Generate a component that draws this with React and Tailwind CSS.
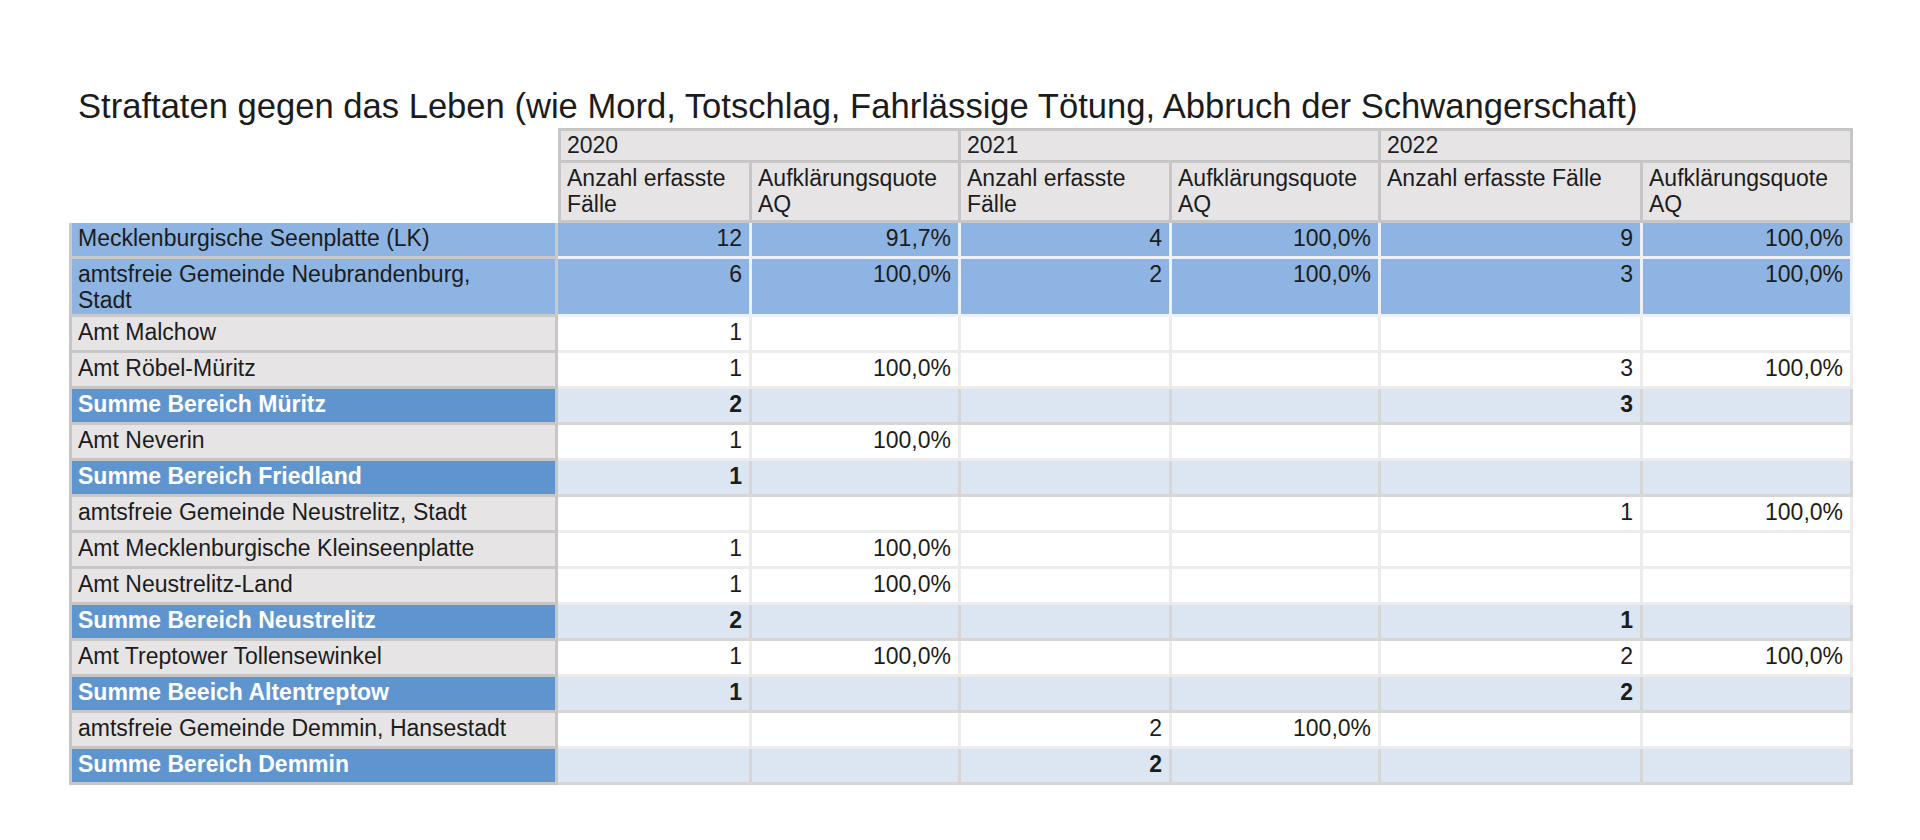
import React from 'react';

// rows of the table: label, six values, kind of row
const rows = [
  { label: 'Mecklenburgische Seenplatte (LK)', values: ['12', '91,7%', '4', '100,0%', '9', '100,0%'], kind: 'lk' },
  { label: ['amtsfreie Gemeinde Neubrandenburg,', 'Stadt'], values: ['6', '100,0%', '2', '100,0%', '3', '100,0%'], kind: 'lk' },
  { label: 'Amt Malchow', values: ['1', '', '', '', '', ''], kind: 'amt' },
  { label: 'Amt Röbel-Müritz', values: ['1', '100,0%', '', '', '3', '100,0%'], kind: 'amt' },
  { label: 'Summe Bereich Müritz', values: ['2', '', '', '', '3', ''], kind: 'sum' },
  { label: 'Amt Neverin', values: ['1', '100,0%', '', '', '', ''], kind: 'amt' },
  { label: 'Summe Bereich Friedland', values: ['1', '', '', '', '', ''], kind: 'sum' },
  { label: 'amtsfreie Gemeinde Neustrelitz, Stadt', values: ['', '', '', '', '1', '100,0%'], kind: 'amt' },
  { label: 'Amt Mecklenburgische Kleinseenplatte', values: ['1', '100,0%', '', '', '', ''], kind: 'amt' },
  { label: 'Amt Neustrelitz-Land', values: ['1', '100,0%', '', '', '', ''], kind: 'amt' },
  { label: 'Summe Bereich Neustrelitz', values: ['2', '', '', '', '1', ''], kind: 'sum' },
  { label: 'Amt Treptower Tollensewinkel', values: ['1', '100,0%', '', '', '2', '100,0%'], kind: 'amt' },
  { label: 'Summe Beeich Altentreptow', values: ['1', '', '', '', '2', ''], kind: 'sum' },
  { label: 'amtsfreie Gemeinde Demmin, Hansestadt', values: ['', '', '2', '100,0%', '', ''], kind: 'amt' },
  { label: 'Summe Bereich Demmin', values: ['', '', '2', '', '', ''], kind: 'sum' },
];

const labelClass = {
  lk: 'bg-[#8db4e2] border-[#c9c9c9] text-[#1c1c1c]',
  amt: 'bg-[#e6e4e5] border-[#c6c6c6] text-[#1c1c1c]',
  sum: 'bg-[#5f95cf] border-[#c6c6c6] text-white font-bold',
};

const cellClass = {
  lk: 'bg-[#8db4e2] border-[#eef2f8]',
  amt: 'bg-white border-[#ececec]',
  sum: 'bg-[#dce5f2] border-[#d6d6d6] font-bold',
};

const App = () => {
  return (
    <div className="min-h-[840px] w-[1920px] bg-white font-['Liberation_Sans',Arial,sans-serif] text-[#1c1c1c]">
      <div className="pt-[90px] pl-[69px]">
        <h1 className="pl-[9px] text-[34.6px] leading-[32px] font-normal text-[#1c1c1c] whitespace-nowrap">
          Straftaten gegen das Leben (wie Mord, Totschlag, Fahrlässige Tötung, Abbruch der Schwangerschaft)
        </h1>

        <table className="mt-[6px] table-fixed border-separate border-spacing-0 text-[23px] leading-[26px] w-[1784px]">
          <colgroup>
            <col className="w-[489px]" />
            <col className="w-[194px]" />
            <col className="w-[209px]" />
            <col className="w-[211px]" />
            <col className="w-[209px]" />
            <col className="w-[262px]" />
            <col className="w-[210px]" />
          </colgroup>
          <thead>
            <tr className="h-[35px]">
              <th rowSpan={2} className="bg-white"></th>
              <th colSpan={2} className="bg-[#e6e4e5] border-t-[3px] border-l-[3px] border-b-[3px] border-r-[3px] border-[#c6c6c6] px-[6px] pt-[1px] text-left align-top font-normal">2020</th>
              <th colSpan={2} className="bg-[#e6e4e5] border-t-[3px] border-b-[3px] border-r-[3px] border-[#c6c6c6] px-[6px] pt-[1px] text-left align-top font-normal">2021</th>
              <th colSpan={2} className="bg-[#e6e4e5] border-t-[3px] border-b-[3px] border-r-[3px] border-[#c6c6c6] px-[6px] pt-[1px] text-left align-top font-normal">2022</th>
            </tr>
            <tr className="h-[60px]">
              <th className="bg-[#e6e4e5] border-l-[3px] border-b-[3px] border-r-[3px] border-[#c6c6c6] px-[6px] pt-[2px] text-left align-top font-normal whitespace-nowrap">Anzahl erfasste<br />Fälle</th>
              <th className="bg-[#e6e4e5] border-b-[3px] border-r-[3px] border-[#c6c6c6] px-[6px] pt-[2px] text-left align-top font-normal whitespace-nowrap">Aufklärungsquote<br />AQ</th>
              <th className="bg-[#e6e4e5] border-b-[3px] border-r-[3px] border-[#c6c6c6] px-[6px] pt-[2px] text-left align-top font-normal whitespace-nowrap">Anzahl erfasste<br />Fälle</th>
              <th className="bg-[#e6e4e5] border-b-[3px] border-r-[3px] border-[#c6c6c6] px-[6px] pt-[2px] text-left align-top font-normal whitespace-nowrap">Aufklärungsquote<br />AQ</th>
              <th className="bg-[#e6e4e5] border-b-[3px] border-r-[3px] border-[#c6c6c6] px-[6px] pt-[2px] text-left align-top font-normal whitespace-nowrap">Anzahl erfasste Fälle</th>
              <th className="bg-[#e6e4e5] border-b-[3px] border-r-[3px] border-[#c6c6c6] px-[6px] pt-[2px] text-left align-top font-normal whitespace-nowrap">Aufklärungsquote<br />AQ</th>
            </tr>
          </thead>
          <tbody>
            {rows.map((row, i) => (
              <tr key={i} className={Array.isArray(row.label) ? 'h-[58px]' : 'h-[36px]'}>
                <td className={`border-l-[3px] border-b-[3px] border-r-[3px] px-[6px] pt-[2px] align-top whitespace-nowrap ${labelClass[row.kind]}`}>
                  {Array.isArray(row.label) ? (
                    <>
                      {row.label[0]}
                      <br />
                      {row.label[1]}
                    </>
                  ) : (
                    row.label
                  )}
                </td>
                {row.values.map((v, j) => (
                  <td
                    key={j}
                    className={`border-b-[3px] border-r-[3px] px-[7px] pt-[2px] text-right align-top whitespace-nowrap ${cellClass[row.kind]}`}
                  >
                    {v}
                  </td>
                ))}
              </tr>
            ))}
          </tbody>
        </table>
      </div>
    </div>
  );
};

export default App;
